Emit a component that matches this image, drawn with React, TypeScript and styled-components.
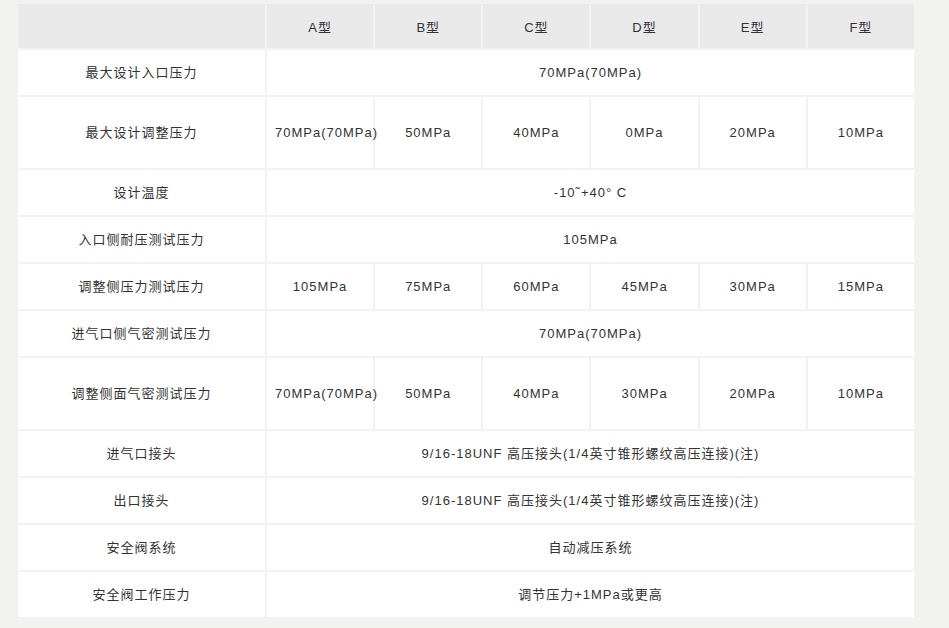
import styled, { createGlobalStyle } from "styled-components";

const Global = createGlobalStyle`
  body {
    margin: 0;
    background: #f2f2f1;
    font-family: "Liberation Sans", "Noto Sans CJK SC", sans-serif;
  }
`;

const Page = styled.div`
  padding: 2px 0 0 16px;
`;

const Table = styled.table`
  width: 900px;
  table-layout: fixed;
  border-collapse: separate;
  border-spacing: 2px;
  font-size: 13px;
  letter-spacing: 1px;
  color: #333;
`;

const Th = styled.th<{ w?: number }>`
  width: ${(p) => (p.w ? `${p.w}px` : "auto")};
  height: 44px;
  padding: 0;
  background: #e9e9e9;
  font-weight: normal;
  text-align: center;
`;

const Td = styled.td<{ tall?: boolean }>`
  height: ${(p) => (p.tall ? "71px" : "45px")};
  padding: 0 8px;
  background: #fff;
  text-align: center;
  line-height: 26px;
`;

const types = ["A型", "B型", "C型", "D型", "E型", "F型"];

type Row = { label: string; all?: string; each?: string[]; tall?: boolean };

const rows: Row[] = [
  { label: "最大设计入口压力", all: "70MPa(70MPa)" },
  { label: "最大设计调整压力", each: ["70MPa(70MPa)", "50MPa", "40MPa", "0MPa", "20MPa", "10MPa"], tall: true },
  { label: "设计温度", all: "-10˜+40° C" },
  { label: "入口侧耐压测试压力", all: "105MPa" },
  { label: "调整侧压力测试压力", each: ["105MPa", "75MPa", "60MPa", "45MPa", "30MPa", "15MPa"] },
  { label: "进气口侧气密测试压力", all: "70MPa(70MPa)" },
  { label: "调整侧面气密测试压力", each: ["70MPa(70MPa)", "50MPa", "40MPa", "30MPa", "20MPa", "10MPa"], tall: true },
  { label: "进气口接头", all: "9/16-18UNF 高压接头(1/4英寸锥形螺纹高压连接)(注)" },
  { label: "出口接头", all: "9/16-18UNF 高压接头(1/4英寸锥形螺纹高压连接)(注)" },
  { label: "安全阀系统", all: "自动减压系统" },
  { label: "安全阀工作压力", all: "调节压力+1MPa或更高" },
];

export default function App() {
  return (
    <Page>
      <Global />
      <Table>
        <thead>
          <tr>
            <Th w={247} />
            {types.map((t) => (
              <Th key={t}>{t}</Th>
            ))}
          </tr>
        </thead>
        <tbody>
          {rows.map((r) => (
            <tr key={r.label}>
              <Td tall={r.tall}>{r.label}</Td>
              {r.all ? (
                <Td colSpan={6}>{r.all}</Td>
              ) : (
                r.each!.map((v, i) => (
                  <Td key={i} tall={r.tall}>
                    {v}
                  </Td>
                ))
              )}
            </tr>
          ))}
        </tbody>
      </Table>
    </Page>
  );
}
